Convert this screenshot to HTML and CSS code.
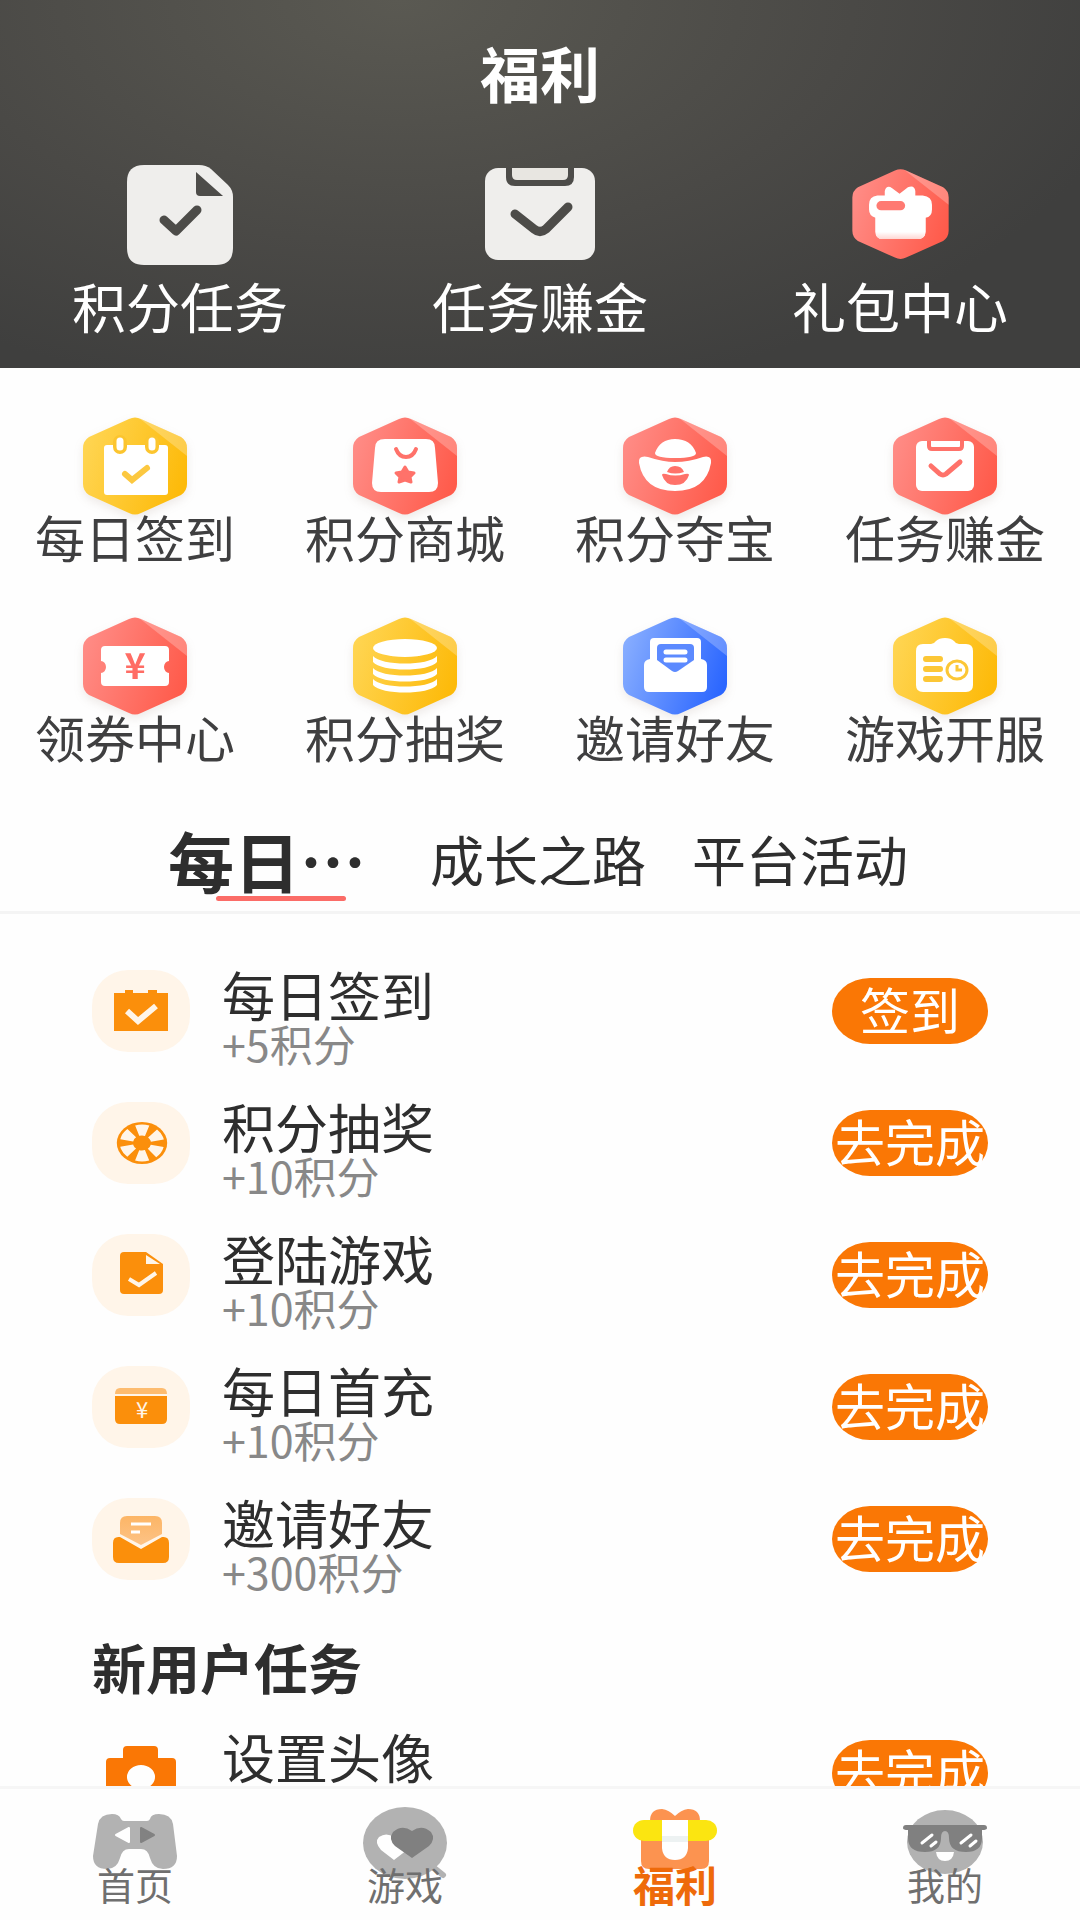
FILE: index.html
```html
<!DOCTYPE html>
<html lang="zh-CN">
<head>
<meta charset="utf-8">
<meta name="viewport" content="width=device-width, initial-scale=1">
<title>福利</title>
<link rel="stylesheet" href="styles.css">
</head>
<body>
<svg class="defs" aria-hidden="true">
  <defs>
    <linearGradient id="gold" x1="0" y1="0.3" x2="1" y2="0.6"><stop offset="0" stop-color="#ffd552"/><stop offset="1" stop-color="#fdba09"/></linearGradient>
    <linearGradient id="coral" x1="0" y1="0.3" x2="1" y2="0.6"><stop offset="0" stop-color="#ff8c86"/><stop offset="1" stop-color="#ff5b4b"/></linearGradient>
    <linearGradient id="blue" x1="0" y1="0.3" x2="1" y2="0.6"><stop offset="0" stop-color="#87adff"/><stop offset="1" stop-color="#2b66ff"/></linearGradient>
    <linearGradient id="giftbody" x1="0" y1="0" x2="0" y2="1"><stop offset="0.7" stop-color="#fff"/><stop offset="1" stop-color="#ffd6d2"/></linearGradient>
    <linearGradient id="paper" x1="0" y1="0" x2="0" y2="1"><stop offset="0" stop-color="#fcb566"/><stop offset="1" stop-color="#fdc386"/></linearGradient>
    <path id="hex" d="M46 2Q52-1 58 2L98 20Q104 24 104 31V67Q104 74 98 78L58 96Q52 99 46 96L6 78Q0 74 0 67V31Q0 24 6 20Z"/>
    <path id="shine" d="M56 1L98 20Q104 24 104 31V39Z" fill="#fff" fill-opacity="0.25"/>
  </defs>
</svg>

<main class="page">
  <header class="hero">
    <h1 class="hero-title">福利</h1>
    <nav class="hero-links">
      <a class="hero-link" href="#points">
        <svg class="hero-icon" width="106" height="100" viewBox="0 0 106 100"><path fill="#efeeec" d="M17 0H72Q79 0 84 4L101 20Q106 25 106 32V83Q106 100 89 100H17Q0 100 0 83V17Q0 0 17 0Z"/><path fill="#4d4c49" d="M69 7L96 31H73Q69 31 69 27Z"/><path d="M37 55L49 66L70 45" fill="none" stroke="#4d4c49" stroke-width="9" stroke-linecap="round" stroke-linejoin="round"/></svg>
        <span>积分任务</span>
      </a>
      <a class="hero-link" href="#earn">
        <svg class="hero-icon" width="110" height="100" viewBox="0 -3 110 100"><rect width="110" height="92" rx="13" fill="#efeeec"/><path fill="#4d4c49" d="M21 0H89V9Q89 18 80 18H30Q21 18 21 9Z"/><path fill="#e8e6e1" d="M27 0H83V7Q83 12 78 12H32Q27 12 27 7Z"/><path d="M30 46L49 61Q55 66 61 61L83 39" fill="none" stroke="#4d4c49" stroke-width="9" stroke-linecap="round" stroke-linejoin="round"/></svg>
        <span>任务赚金</span>
      </a>
      <a class="hero-link" href="#gifts">
        <svg class="hero-icon" width="97" height="100" viewBox="0 -4 104 108"><use href="#hex" fill="url(#coral)"/><use href="#shine"/><path fill="#fff" d="M27 29H35V24Q37 17 43 21L51 27L60 20Q67 17 68 24V29H76Q86 30 86 39V44Q86 52 79 53V68Q79 76 70 76H33Q25 76 25 68V53Q18 51 18 44V39Q18 30 27 29Z"/><path fill="url(#giftbody)" d="M25 50H79V68Q79 76 70 76H33Q25 76 25 68Z"/><rect x="26" y="35" width="31" height="10" rx="5" fill="#ff7a72"/></svg>
        <span>礼包中心</span>
      </a>
    </nav>
  </header>

  <nav class="shortcuts">
    <a class="shortcut" href="#sign"><svg width="104" height="98" viewBox="0 0 104 98"><use href="#hex" fill="url(#gold)"/><use href="#shine"/><rect x="21" y="28" width="64" height="50" rx="3" fill="#fff"/><path d="M37 25V30M69 25V30" stroke="#fcc52f" stroke-width="14" stroke-linecap="round"/><path d="M37 24V30M69 24V30" stroke="#fff" stroke-width="7" stroke-linecap="round"/><path d="M42 57L49 63L64 51" fill="none" stroke="#fcc840" stroke-width="6" stroke-linecap="round"/></svg><span>每日签到</span></a>
    <a class="shortcut" href="#mall"><svg width="104" height="98" viewBox="0 0 104 98"><use href="#hex" fill="url(#coral)"/><use href="#shine"/><path fill="#fff" d="M32 22H73Q82 22 82 31L85 66Q85 75 76 75H28Q19 75 19 66L22 31Q22 22 32 22Z"/><path d="M43 32Q46 40 53 40Q60 40 63 32" fill="none" stroke="#ff726a" stroke-width="4" stroke-linecap="round"/><path d="M52 50L55 55L61 56L57 60L58 65L52 63L46 65L47 60L43 56L49 55Z" fill="#ff726a" stroke="#ff726a" stroke-width="3" stroke-linejoin="round"/></svg><span>积分商城</span></a>
    <a class="shortcut" href="#treasure"><svg width="104" height="98" viewBox="0 0 104 98"><use href="#hex" fill="url(#coral)"/><use href="#shine"/><path fill="#fff" d="M32 36Q37 22 52 22Q68 22 73 36Q73 41 52 41Q32 41 32 36ZM16 46Q15 38 25 40Q40 45 52 45Q66 45 80 40Q89 38 88 46Q83 74 52 74Q21 74 16 46Z"/><path fill="#ff726a" d="M44 55Q46 49 52 49Q59 49 61 55Q52 58 44 55ZM39 58Q39 56 43 57Q52 60 62 57Q66 56 66 58Q63 68 52 68Q42 68 39 58Z"/></svg><span>积分夺宝</span></a>
    <a class="shortcut" href="#earn"><svg width="104" height="98" viewBox="0 0 104 98"><use href="#hex" fill="url(#coral)"/><use href="#shine"/><rect x="23" y="24" width="58" height="50" rx="6" fill="#fff"/><path d="M36 24V29Q36 32 39 32H66Q69 32 69 29V24" fill="none" stroke="#ff726a" stroke-width="4"/><path d="M38 49L47 57Q50 59 53 57L67 45" fill="none" stroke="#ff726a" stroke-width="5" stroke-linecap="round"/></svg><span>任务赚金</span></a>
    <a class="shortcut" href="#coupons"><svg width="104" height="98" viewBox="0 0 104 98"><use href="#hex" fill="url(#coral)"/><use href="#shine"/><path fill="#fff" d="M22 29H82Q86 29 86 33V44A5 6 0 0 0 86 56V65Q86 69 82 69H22Q18 69 18 65V56A5 6 0 0 0 18 44V33Q18 29 22 29Z"/><text class="yen" x="52" y="62" font-size="36" fill="#ff6d65">¥</text></svg><span>领券中心</span></a>
    <a class="shortcut" href="#draw"><svg width="104" height="98" viewBox="0 0 104 98"><use href="#hex" fill="url(#gold)"/><use href="#shine"/><g fill="#fff"><ellipse cx="52" cy="31" rx="32" ry="9"/><path id="coin" d="M20 39C28 49 76 49 84 39V45C76 55 28 55 20 45Z"/><use href="#coin" y="12"/><use href="#coin" y="23"/></g></svg><span>积分抽奖</span></a>
    <a class="shortcut" href="#invite"><svg width="104" height="98" viewBox="0 0 104 98"><use href="#hex" fill="url(#blue)"/><use href="#shine"/><path fill="#fff" d="M31 21H74Q78 21 78 25V42Q84 43 84 48V70Q84 75 79 75H26Q21 75 21 70V48Q21 43 27 42V25Q27 21 31 21Z"/><path fill="#5c8aff" d="M38 27H67Q71 27 71 31V43L55 54Q52 56 49 54L34 43V31Q34 27 38 27Z"/><path d="M43 35H62M43 43H62" stroke="#fff" stroke-width="5" stroke-linecap="round"/></svg><span>邀请好友</span></a>
    <a class="shortcut" href="#servers"><svg width="104" height="98" viewBox="0 0 104 98"><use href="#hex" fill="url(#gold)"/><use href="#shine"/><path fill="#fff" d="M30 27H38Q41 27 43 24Q46 21 52 21Q58 21 61 24Q63 27 66 27H73Q80 27 80 34V68Q80 75 73 75H30Q23 75 23 68V34Q23 27 30 27Z"/><path d="M33 42H47M33 52H47M33 62H47" stroke="#fcc736" stroke-width="6" stroke-linecap="round"/><ellipse cx="64" cy="53" rx="10" ry="9" fill="none" stroke="#fcc736" stroke-width="3"/><path d="M64 48V53H69" fill="none" stroke="#fcc736" stroke-width="3"/></svg><span>游戏开服</span></a>
  </nav>

  <div class="tabs" role="tablist">
    <button class="tab tab-active" role="tab" aria-selected="true">每日…</button>
    <button class="tab" role="tab" aria-selected="false">成长之路</button>
    <button class="tab" role="tab" aria-selected="false">平台活动</button>
  </div>

  <section class="tasks">
    <article class="task">
      <svg class="task-icon" width="98" height="82" viewBox="0 0 98 82"><path fill="#fb8f0b" d="M22 23H33V20H41V23H56V20H65V23H76V61H22Z"/><path d="M35 41L46 51L64 36" fill="none" stroke="#fff5e8" stroke-width="6"/></svg>
      <div><h3 class="task-name">每日签到</h3><p class="task-points">+5积分</p></div>
      <button class="task-action">签到</button>
    </article>
    <article class="task">
      <svg class="task-icon" width="98" height="82" viewBox="0 0 98 82"><g transform="translate(50 41) scale(1.2 1)"><circle r="21" fill="#fb8f0b"/><circle r="13" fill="none" stroke="#fff5e8" stroke-width="11" stroke-dasharray="8.4 5.21" transform="rotate(71)"/><circle r="6" fill="#fb8f0b"/></g></svg>
      <div><h3 class="task-name">积分抽奖</h3><p class="task-points">+10积分</p></div>
      <button class="task-action">去完成</button>
    </article>
    <article class="task">
      <svg class="task-icon" width="98" height="82" viewBox="0 0 98 82"><path fill="#fb8f0b" d="M32 18H54L71 30V56Q71 60 67 60H32Q28 60 28 56V22Q28 18 32 18Z"/><path fill="#fff5e8" d="M54 21L68 30H54Z"/><path d="M37 45L47 51L64 39" fill="none" stroke="#fff5e8" stroke-width="4"/></svg>
      <div><h3 class="task-name">登陆游戏</h3><p class="task-points">+10积分</p></div>
      <button class="task-action">去完成</button>
    </article>
    <article class="task">
      <svg class="task-icon" width="98" height="82" viewBox="0 0 98 82"><path fill="#fdbc70" d="M28 22H70Q75 22 75 28H23Q23 22 28 22Z"/><path fill="#fb8f0b" d="M23 30H75V53Q75 58 70 58H28Q23 58 23 53Z"/><text class="yen-light" x="50" y="52" font-size="22" fill="#fff5e8">¥</text></svg>
      <div><h3 class="task-name">每日首充</h3><p class="task-points">+10积分</p></div>
      <button class="task-action">去完成</button>
    </article>
    <article class="task">
      <svg class="task-icon" width="98" height="82" viewBox="0 0 98 82"><path fill="url(#paper)" d="M35 18H63Q70 18 70 25V36L49 47L28 36V25Q28 18 35 18Z"/><path fill="#fb8f0b" d="M28 39L49 51L70 39Q77 38 77 45V59Q77 65 71 65H27Q21 65 21 59V45Q21 38 28 39Z"/><path d="M39 26H59M39 34H48" stroke="#fff" stroke-width="3"/></svg>
      <div><h3 class="task-name">邀请好友</h3><p class="task-points">+300积分</p></div>
      <button class="task-action">去完成</button>
    </article>

    <h2 class="tasks-title">新用户任务</h2>

    <article class="task">
      <svg class="task-icon task-icon-plain" width="98" height="82" viewBox="0 0 98 82"><path fill="#fa7705" fill-rule="evenodd" d="M35 14H62Q66 14 66 18V26H80Q84 26 84 30V66Q84 70 80 70H18Q14 70 14 66V30Q14 26 18 26H31V18Q31 14 35 14ZM49 33A14 12 0 0 0 49 57A14 12 0 0 0 49 33Z"/></svg>
      <div><h3 class="task-name">设置头像</h3></div>
      <button class="task-action">去完成</button>
    </article>
  </section>
</main>

<nav class="bottom-nav">
  <a class="nav-item" href="#home"><svg width="84" height="74" viewBox="0 2 84 74"><path fill="#b2b2b2" d="M5 20Q7 10 19 10Q26 10 28 15Q29 17 31 17H54Q56 17 57 15Q58 10 66 10Q78 10 80 20L84 52Q84 65 70 65Q60 65 57 54Q55 45 48 45H36Q29 45 27 54Q24 65 14 65Q0 65 0 52Z"/><path fill="#fff" stroke="#fff" stroke-width="2" stroke-linejoin="round" d="M23 31L36 24V38Z"/><path fill="#828282" stroke="#828282" stroke-width="2" stroke-linejoin="round" d="M61 31L48 24V38Z"/></svg><span>首页</span></a>
  <a class="nav-item" href="#games"><svg width="84" height="74" viewBox="0 0 84 74"><ellipse cx="42" cy="37" rx="42" ry="36" fill="#b2b2b2"/><path d="M70 61L80 69" stroke="#b2b2b2" stroke-width="6" stroke-linecap="round"/><path fill="#fff" d="M31 54L18 44Q11 36 16 31Q23 26 31 31Q39 26 46 31Q51 37 44 44Z"/><path fill="#808080" d="M49 52L32 40Q25 33 30 26Q39 18 49 25Q59 18 68 26Q73 33 66 40Z"/></svg><span>游戏</span></a>
  <a class="nav-item nav-active" href="#welfare" aria-current="page"><svg width="84" height="74" viewBox="0 1 84 74"><path fill="#fc9350" d="M17 16Q17 4 29 4Q36 5 42 11Q48 5 55 4Q67 4 67 16ZM8 35H76V56Q76 64 68 64H16Q8 64 8 56Z"/><rect y="15" width="84" height="21" rx="11" fill="#fbe511"/><path fill="#fff" d="M29 15H55V43Q54 55 42 55Q30 55 29 43Z"/><path fill="#edf2f2" d="M29 31H55V37H29Z"/></svg><span>福利</span></a>
  <a class="nav-item" href="#me"><svg width="84" height="74" viewBox="0 1 84 74"><ellipse cx="42" cy="37" rx="38" ry="32" fill="#b2b2b2"/><path fill="#808080" d="M3 20H81Q84 20 84 23Q84 25 79 25V33Q79 47 63 47Q46 47 46 33Q46 26 42 26Q38 26 38 33Q38 47 22 47Q5 47 5 33V25Q0 25 0 23Q0 20 3 20Z"/><path d="M19 38L29 30M28 41L33 37M58 38L68 30M67 41L73 36" stroke="#fff" stroke-width="3" stroke-linecap="round"/><path fill="#fff" d="M33 47H51Q50 56 42 56Q34 56 33 47Z"/></svg><span>我的</span></a>
</nav>
</body>
</html>
```
FILE: styles.css
```css
* {
  box-sizing: border-box;
  margin: 0;
  padding: 0;
}

body {
  display: flex;
  flex-direction: column;
  height: 100vh;
  background: #fefefe;
  color: #2e2e2e;
  font-family: "Noto Sans CJK SC", sans-serif;
}

a {
  color: inherit;
  text-decoration: none;
}

button {
  border: 0;
  background: none;
  color: inherit;
  font: inherit;
  white-space: nowrap;
}

svg {
  display: block;
}

.defs {
  position: absolute;
  width: 0;
  height: 0;
}

.yen,
.yen-light {
  font-family: "Noto Sans CJK SC", sans-serif;
  font-weight: 700;
  text-anchor: middle;
}

.yen-light {
  font-weight: 400;
}

.page {
  flex: 1;
  min-height: 0;
  overflow-y: auto;
  scrollbar-width: none;
}

/* Header */
.hero {
  padding: 40px 0 24px;
  background: radial-gradient(ellipse 70% 110% at 37% 0, #5a5952, #4a4946 60%, #3f3f3e);
  color: #fff;
}

.hero-title {
  font-size: 60px;
  line-height: 64px;
  font-weight: 700;
  text-align: center;
}

.hero-links {
  display: grid;
  grid-template-columns: repeat(3, 1fr);
  margin-top: 61px;
}

.hero-link {
  display: flex;
  flex-direction: column;
  align-items: center;
  gap: 11px;
  font-size: 54px;
  line-height: 60px;
}

.hero-link span {
  height: 68px;
}

/* Shortcut grid */
.shortcuts {
  display: grid;
  grid-template-columns: repeat(4, 1fr);
  row-gap: 54px;
  padding: 49px 0 44px;
}

.shortcut {
  display: flex;
  flex-direction: column;
  align-items: center;
  color: #3f3f40;
  font-size: 50px;
  line-height: 54px;
  white-space: nowrap;
}

.shortcut svg {
  filter: drop-shadow(0 4px 5px rgba(120, 90, 70, 0.12));
}

.shortcut span {
  margin-top: -6px;
}

/* Tabs */
.tabs {
  display: flex;
  justify-content: center;
  align-items: center;
  gap: 46px;
  height: 107px;
  padding-right: 4px;
  border-bottom: 3px solid #f4f4f4;
}

.tab {
  position: relative;
  height: 80px;
  font-size: 54px;
  line-height: 70px;
}

.tab-active {
  margin-right: 18px;
  font-size: 66px;
  font-weight: 700;
}

.tab-active::after {
  content: "";
  position: absolute;
  left: 50%;
  bottom: -2px;
  width: 130px;
  height: 5px;
  margin-left: -51px;
  border-radius: 3px;
  background: #fb6c67;
}

/* Task list */
.tasks {
  padding: 56px 92px 34px;
}

.task {
  display: grid;
  grid-template-columns: 98px 1fr 156px;
  column-gap: 32px;
  align-items: start;
  margin-bottom: 34px;
}

.task-icon {
  border-radius: 36px;
  background: #fff5e9;
}

.task-icon-plain {
  background: none;
}

.task-name {
  font-size: 53px;
  line-height: 48px;
  font-weight: 400;
}

.task-points {
  color: #888;
  font-size: 43px;
  line-height: 50px;
}

.task-action {
  width: 156px;
  height: 66px;
  margin-top: 8px;
  padding-bottom: 6px;
  border-radius: 38px / 33px;
  background: #fa7705;
  color: #fff;
  font-size: 50px;
  line-height: 60px;
}

.tasks-title {
  margin: 44px 0 38px;
  font-size: 54px;
  line-height: 54px;
  font-weight: 700;
}

/* Bottom navigation */
.bottom-nav {
  display: grid;
  grid-template-columns: repeat(4, 1fr);
  padding: 17px 0 16px;
  border-top: 3px solid #f6f6f6;
  background: #fefefe;
}

.nav-item {
  display: flex;
  flex-direction: column;
  align-items: center;
  color: #6f6f6f;
  font-size: 38px;
  line-height: 40px;
}

.nav-item span {
  margin-top: -16px;
}

.nav-active {
  color: #ee6a0a;
  font-size: 42px;
  font-weight: 700;
}
```
